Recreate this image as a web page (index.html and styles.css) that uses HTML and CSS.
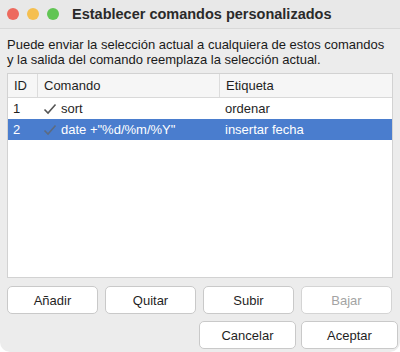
FILE: index.html
```html
<!DOCTYPE html>
<html lang="es">
<head>
    <meta charset="UTF-8">
    <title>Establecer comandos personalizados</title>
    <link rel="stylesheet" href="styles.css">
</head>
<body>
    <div class="window">
        <div class="titlebar">
            <div class="lights">
                <span class="light red"></span>
                <span class="light yellow"></span>
                <span class="light green"></span>
            </div>
            <h1>Establecer comandos personalizados</h1>
        </div>

        <div class="content">
            <p class="description">Puede enviar la selección actual a cualquiera de estos comandos y la salida del comando reemplaza la selección actual.</p>

            <div class="table">
                <div class="row header">
                    <div class="cell">ID</div>
                    <div class="cell">Comando</div>
                    <div class="cell">Etiqueta</div>
                </div>
                <div class="row">
                    <div class="cell">1</div>
                    <div class="cell command">
                        <svg class="check" width="14" height="12" viewBox="0 0 14 12"><path d="M1.5 6.5 L5 10 L12.5 1.5" /></svg>
                        sort
                    </div>
                    <div class="cell">ordenar</div>
                </div>
                <div class="row selected">
                    <div class="cell">2</div>
                    <div class="cell command">
                        <svg class="check" width="14" height="12" viewBox="0 0 14 12"><path d="M1.5 6.5 L5 10 L12.5 1.5" /></svg>
                        date +"%d/%m/%Y"
                    </div>
                    <div class="cell">insertar fecha</div>
                </div>
            </div>

            <div class="actions">
                <button>Añadir</button>
                <button>Quitar</button>
                <button>Subir</button>
                <button disabled>Bajar</button>
            </div>

            <div class="dialog-buttons">
                <button>Cancelar</button>
                <button>Aceptar</button>
            </div>
        </div>
    </div>
</body>
</html>
```

FILE: styles.css
```css
* {
    margin: 0;
    padding: 0;
    box-sizing: border-box;
}

body {
    background: #ffffff;
    font-family: 'Liberation Sans', Arial, sans-serif;
    font-size: 13px;
    color: #1f1f1f;
}

.window {
    width: 400px;
    height: 352px;
    background: #ececec;
    border-radius: 0 0 10px 10px;
    display: flex;
    flex-direction: column;
    overflow: hidden;
}

.titlebar {
    height: 29px;
    display: flex;
    align-items: center;
    gap: 13px;
    padding-left: 7px;
    background: #e8e8e8;
    border-bottom: 1px solid #d8d8d8;
}

.lights {
    display: flex;
    gap: 8px;
}

.light {
    width: 12px;
    height: 12px;
    border-radius: 50%;
}

.red { background: #ed6a5e; }
.yellow { background: #f5bf4f; }
.green { background: #61c554; }

h1 {
    font-size: 14.5px;
    font-weight: bold;
    color: #2a2a2a;
}

.content {
    flex: 1;
    display: flex;
    flex-direction: column;
    padding: 8px 0 3px 7px;
}

.description {
    max-width: 380px;
    line-height: 15px;
    margin-bottom: 6px;
    color: #1a1a1a;
}

.table {
    flex: 1;
    width: 386px;
    background: #ffffff;
    border: 1px solid #d2d2d2;
}

.row {
    display: grid;
    grid-template-columns: 30px 182px 1fr;
    height: 21px;
    align-items: center;
}

.row.header {
    height: 24px;
    background: #f6f6f6;
    border-bottom: 1px solid #d9d9d9;
}

.row.header .cell {
    height: 100%;
    display: flex;
    align-items: center;
    padding-left: 6px;
    border-right: 1px solid #dcdcdc;
}

.row.header .cell:last-child {
    border-right: none;
}

.cell {
    padding-left: 5px;
    white-space: nowrap;
}

.cell.command {
    display: flex;
    align-items: center;
    gap: 4px;
}

.check {
    fill: none;
    stroke: #555555;
    stroke-width: 1.6;
}

.row.selected {
    background: #4a7dce;
    color: #ffffff;
}

.row.selected .check {
    stroke: #5d6b80;
}

.actions {
    display: grid;
    grid-template-columns: repeat(4, 91px);
    gap: 7px;
    margin-top: 8px;
}

.dialog-buttons {
    display: flex;
    justify-content: flex-end;
    gap: 5px;
    margin-top: 7px;
    padding-right: 2px;
}

button {
    height: 28px;
    background: #ffffff;
    border: 1px solid #c9c9c9;
    border-radius: 5px;
    font-family: 'Liberation Sans', Arial, sans-serif;
    font-size: 13px;
    color: #1f1f1f;
}

button:disabled {
    color: #a3a3a3;
    border-color: #d4d4d4;
}

.dialog-buttons button {
    width: 97px;
}
```
